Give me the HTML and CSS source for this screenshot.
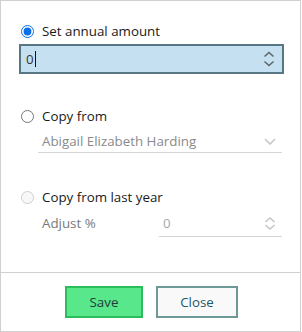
FILE: index.html
```html
<!DOCTYPE html>
<html>
<head>
  <meta name="viewport" content="width=device-width, initial-scale=1.0">
  <link rel="stylesheet" href="styles.css">
</head>
<body>
  <div class="dialog">
    <div class="dialog-body">
      <label class="option">
        <input type="radio" name="mode" checked>
        <span>Set annual amount</span>
      </label>
      <div class="amount-input">
        <span class="value">0</span><span class="caret"></span>
        <svg class="spin" width="12" height="16" viewBox="0 0 12 16">
          <path d="M1.5 5.5 L6 1.5 L10.5 5.5" />
          <path d="M1.5 10.5 L6 14.5 L10.5 10.5" />
        </svg>
      </div>

      <label class="option option-copy">
        <input type="radio" name="mode">
        <span>Copy from</span>
      </label>
      <div class="select">
        <span>Abigail Elizabeth Harding</span>
        <svg class="chev" width="12" height="7" viewBox="0 0 12 7">
          <path d="M1 1 L6 6 L11 1" />
        </svg>
      </div>

      <label class="option option-last">
        <input type="radio" name="mode" disabled>
        <span>Copy from last year</span>
      </label>
      <div class="adjust-row">
        <span class="adjust-label">Adjust %</span>
        <div class="adjust-input">
          <span>0</span>
          <svg class="spin light" width="12" height="13" viewBox="0 0 12 13">
            <path d="M1.5 5 L6 1 L10.5 5" />
            <path d="M1.5 8 L6 12 L10.5 8" />
          </svg>
        </div>
      </div>
    </div>
    <div class="dialog-footer">
      <button class="btn btn-save">Save</button>
      <button class="btn btn-close">Close</button>
    </div>
  </div>
</body>
</html>
```

FILE: styles.css
```css
* {
  margin: 0;
  padding: 0;
  box-sizing: border-box;
}

body {
  background: #fff;
  font-family: 'Open Sans', 'Noto Sans', sans-serif;
  font-size: 13.33px;
  color: #1a1a1a;
}

.dialog {
  width: 301px;
  height: 332px;
  border: 1px solid #d0d0d0;
  display: flex;
  flex-direction: column;
}

.dialog-body {
  flex: 1;
  padding: 21px 16px 0 18px;
}

.option {
  display: flex;
  align-items: center;
  height: 18px;
  line-height: 18px;
  padding-left: 2px;
}

.option input {
  width: 13px;
  height: 13px;
  margin: 0 8px 0 0;
  accent-color: #0b6fe8;
}

.option-copy {
  margin-top: 33px;
}

.option-last {
  margin-top: 35px;
}

.amount-input {
  margin-top: 4px;
  height: 30px;
  border: 2px solid #587784;
  background: #c5e0f1;
  display: flex;
  align-items: center;
  padding: 0 7px 0 5px;
  color: #333;
}

.caret {
  width: 1px;
  height: 16px;
  background: #111;
  margin-left: 1px;
}

.spin {
  margin-left: auto;
  fill: none;
  stroke: #5e6468;
  stroke-width: 1.5;
}

.spin.light {
  stroke: #c4c4c4;
}

.select {
  margin: 6px 2px 0 19px;
  height: 22px;
  border-bottom: 1px solid #d4d4d4;
  padding: 1px 6px 2px 4px;
  line-height: 18px;
  color: #8a8a8a;
  display: flex;
  align-items: center;
}

.chev {
  margin-left: auto;
  fill: none;
  stroke: #c4c4c4;
  stroke-width: 1.5;
}

.adjust-row {
  margin: 6px 2px 0 23px;
  display: flex;
  align-items: flex-start;
}

.adjust-label {
  width: 117px;
  padding-top: 2px;
  line-height: 18px;
  color: #7a7a7a;
}

.adjust-input {
  flex: 1;
  height: 25px;
  border-bottom: 1px solid #d4d4d4;
  padding: 2px 6px 0 4px;
  line-height: 18px;
  color: #a8a8a8;
  display: flex;
  align-items: flex-start;
}

.adjust-input .spin {
  margin-top: 3px;
}

.dialog-footer {
  height: 59px;
  border-top: 1px solid #d0d0d0;
  display: flex;
  justify-content: center;
  gap: 13px;
  padding: 13px 0 0 2px;
}

.btn {
  height: 32px;
  font-family: 'Open Sans', 'Noto Sans', sans-serif;
  font-size: 13.33px;
  border: 2px solid;
  cursor: pointer;
}

.btn-save {
  width: 78px;
  background: #59e78b;
  border-color: #2bbd5c;
  color: #1f3b3a;
}

.btn-close {
  width: 82px;
  background: #f9f9f9;
  border-color: #6d9996;
  color: #1d5a68;
}
```
